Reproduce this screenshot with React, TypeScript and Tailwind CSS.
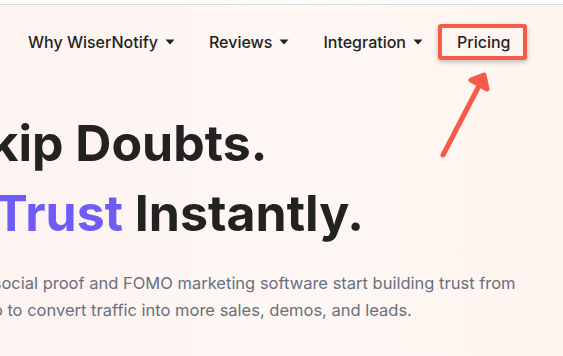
import React from "react";

const navItems = [
  { label: "Why WiserNotify", menu: true },
  { label: "Reviews", menu: true },
  { label: "Integration", menu: true },
  { label: "Pricing", menu: false },
];

function Caret() {
  return (
    <svg width="10" height="6" viewBox="0 0 10 6" className="text-[#222]">
      <path d="M0.5 0.5 L9.5 0.5 L5 5.5 Z" fill="currentColor" />
    </svg>
  );
}

export default function App() {
  return (
    <div
      className="relative w-[563px] h-[356px] overflow-hidden bg-white"
      style={{ fontFamily: "Inter, 'Noto Sans', sans-serif" }}
    >
      <div className="h-[4px] bg-white" />
      <div className="h-[1px] bg-[#d9d9d9]" />
      <div className="relative h-[351px] bg-gradient-to-r from-[#fdf3f1] via-[#fef7f3] to-[#fef5f0]">
        {/* nav */}
        <nav className="flex items-center pl-[11px] pt-[19px]">
          {navItems.map((item) => (
            <div
              key={item.label}
              className="relative flex items-center gap-[7px] px-[17px] h-[36px] text-[16px] font-medium text-[#222]"
            >
              <span>{item.label}</span>
              {item.menu && <Caret />}
              {!item.menu && (
                <div className="absolute -left-[2px] inset-y-0 right-0 rounded-[3px] border-4 border-[#f55b4a] shadow-[0_2px_5px_rgba(0,0,0,0.25)]" />
              )}
            </div>
          ))}
        </nav>

        {/* annotation arrow */}
        <svg
          className="absolute left-[425px] top-[55px]"
          width="80"
          height="110"
          viewBox="0 0 80 110"
        >
          <g
            stroke="#f55b4a"
            strokeWidth="5"
            strokeLinecap="round"
            strokeLinejoin="round"
            fill="#f55b4a"
          >
            <line x1="18" y1="95" x2="56" y2="22" />
            <path d="M46 20 L59 15 L62 29 Z" />
          </g>
        </svg>

        {/* hero */}
        <div className="w-[900px] -ml-[338px] mt-[48px] text-center">
          <h1 className="text-[50px] leading-[70px] font-bold text-[#222]">
            Skip Doubts.
            <br />
            <span className="text-[#6e5cf5]">Build Trust</span> Instantly.
          </h1>
          <p className="mt-[22px] text-[16.5px] leading-[27px] text-[#687080]">
            With WiserNotify's smart, all-in-one social proof and FOMO marketing software start building trust from
            <br />
            the first visit. Easy setup to convert traffic into more sales, demos, and leads.
          </p>
        </div>
      </div>
    </div>
  );
}
